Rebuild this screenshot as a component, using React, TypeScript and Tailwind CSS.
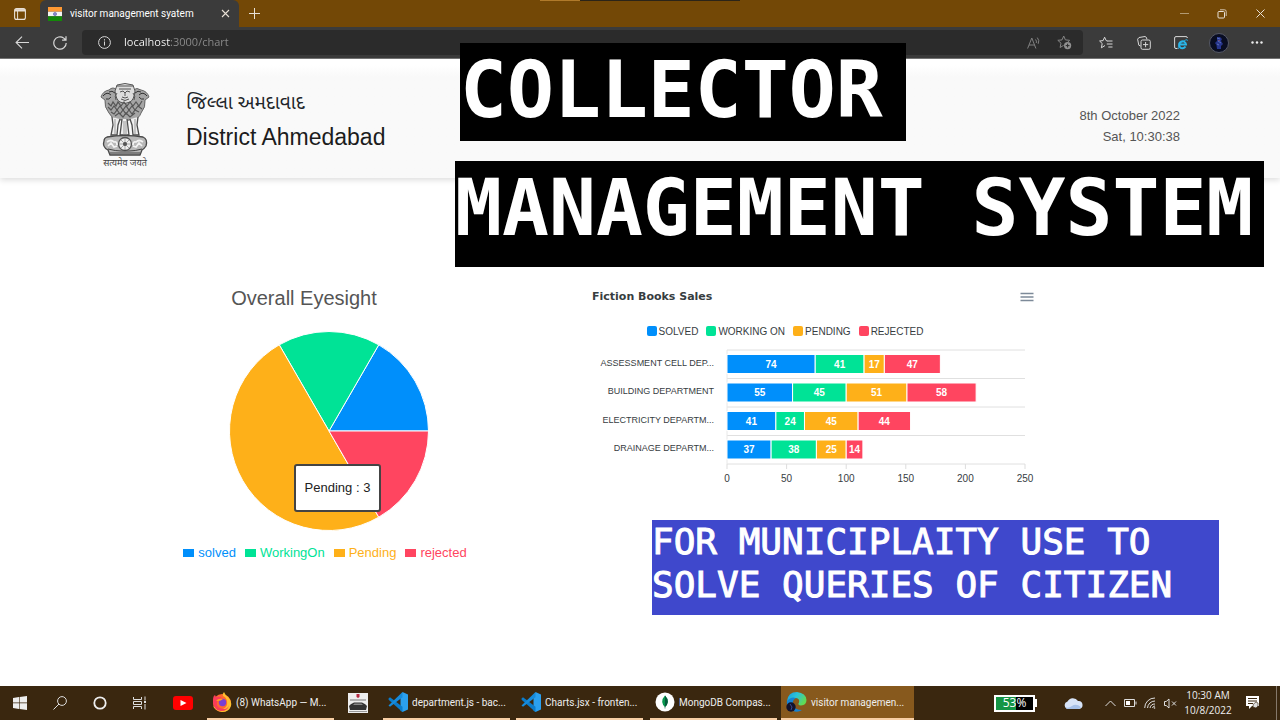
import type { ReactNode } from 'react';

const BLUE = '#008ffb';
const GREEN = '#00e396';
const AMBER = '#feb019';
const RED = '#ff4560';

type Row = { label: string; values: number[] };

const series = [
  { name: 'SOLVED', color: BLUE },
  { name: 'WORKING ON', color: GREEN },
  { name: 'PENDING', color: AMBER },
  { name: 'REJECTED', color: RED },
];

const rows: Row[] = [
  { label: 'ASSESSMENT CELL DEP...', values: [74, 41, 17, 47] },
  { label: 'BUILDING DEPARTMENT', values: [55, 45, 51, 58] },
  { label: 'ELECTRICITY DEPARTM...', values: [41, 24, 45, 44] },
  { label: 'DRAINAGE DEPARTM...', values: [37, 38, 25, 14] },
];

const slices = [
  { name: 'solved', value: 1, color: BLUE },
  { name: 'WorkingOn', value: 1, color: GREEN },
  { name: 'Pending', value: 3, color: AMBER },
  { name: 'rejected', value: 1, color: RED },
];

function IconButton({ label, className, children }: { label: string; className?: string; children: ReactNode }) {
  return (
    <button type="button" aria-label={label} className={`flex shrink-0 items-center justify-center ${className ?? ''}`}>
      {children}
    </button>
  );
}

function TitleBar() {
  return (
    <div className="relative flex h-[27px] items-stretch bg-[#734806] text-[#e8e0d6]">
      <div className="absolute left-[540px] top-0 flex h-px w-[200px]">
        <div className="w-10 bg-[#b07a2a]" />
        <div className="flex-1 bg-[#2b2418]" />
      </div>
      <IconButton label="Tab actions" className="w-10">
        <svg width="12" height="12" viewBox="0 0 12 12" fill="none" stroke="currentColor">
          <rect x=".6" y=".6" width="10.8" height="10.8" rx="2" strokeWidth="1.1" />
          <path d="M1 2.3h10" strokeWidth="2.4" />
          <path d="M3.6 2v9" strokeWidth="1" />
        </svg>
      </IconButton>
      <div className="flex w-[199px] items-center rounded-t-md bg-[#3b3b3b] pl-2">
        <svg width="14" height="14" viewBox="0 0 14 14">
          <path d="M0 0h14v4.7H0z" fill="#ff9933" />
          <path d="M0 4.7h14v4.6H0z" fill="#f4f4f4" />
          <path d="M0 9.3h14V14H0z" fill="#138808" />
          <circle cx="7" cy="7" r="1.6" fill="#8a8ac8" stroke="#4848a0" strokeWidth=".5" />
        </svg>
        <span className="ml-2 flex-1 whitespace-nowrap font-['Roboto',sans-serif] text-[10px] text-white">visitor management syatem</span>
        <IconButton label="Close tab" className="mr-[9px]">
          <svg width="9" height="9" viewBox="0 0 9 9" stroke="currentColor" strokeWidth="1.1">
            <path d="M1 1l7 7M8 1L1 8" />
          </svg>
        </IconButton>
      </div>
      <IconButton label="New tab" className="w-[30px]">
        <svg width="11" height="11" viewBox="0 0 11 11" stroke="currentColor">
          <path d="M5.5 0v11M0 5.5h11" />
        </svg>
      </IconButton>
      <div className="flex-1" />
      <IconButton label="Minimize" className="w-[38px]">
        <svg width="9" height="9" viewBox="0 0 9 9" stroke="#b29a72"><path d="M0 4.5h9" /></svg>
      </IconButton>
      <IconButton label="Restore" className="w-[38px]">
        <svg width="10" height="10" viewBox="0 0 10 10" fill="none" stroke="currentColor">
          <rect x="1" y="2.5" width="6.5" height="6.5" rx="1" />
          <path d="M3 .8h4.6A1.6 1.6 0 0 1 9.2 2.4V7" strokeWidth=".8" />
        </svg>
      </IconButton>
      <IconButton label="Close window" className="w-[39px]">
        <svg width="9" height="9" viewBox="0 0 9 9" stroke="currentColor"><path d="M.5.5l8 8M8.5.5l-8 8" /></svg>
      </IconButton>
    </div>
  );
}

function AddressBar() {
  return (
    <div className="flex h-8 items-center border-b border-[#777] bg-[#3b3b3b] pr-1 text-[#d8d8d8]">
      <IconButton label="Back" className="ml-1 w-[37px]">
        <svg width="15" height="13" viewBox="0 0 15 13" fill="none" stroke="currentColor" strokeWidth="1.1">
          <path d="M14 6.5H1M7 .7L1.1 6.5 7 12.3" />
        </svg>
      </IconButton>
      <IconButton label="Refresh" className="w-[37px]">
        <svg width="14" height="14" viewBox="0 0 14 14" fill="none" stroke="currentColor" strokeWidth="1.2">
          <path d="M13.2 7A6.2 6.2 0 1 1 10.8 2.1L12.8 4M13 .3V4.200H9.100" />
        </svg>
      </IconButton>
      <div className="ml-1 flex h-[25px] flex-1 items-center rounded bg-[#2b2b2b] pl-4 pr-[11px]">
        <svg width="13" height="13" viewBox="0 0 13 13" fill="none" stroke="currentColor">
          <circle cx="6.5" cy="6.5" r="5.9" />
          <path d="M6.500 5.500v4M6.500 3.200v1.300" />
        </svg>
        <input
          aria-label="Address"
          defaultValue="localhost:3000/chart"
          className="ml-[13px] flex-1 bg-[linear-gradient(90deg,#fff_46px,#8d8d8d_46px)] bg-clip-text text-[11px] text-transparent outline-none"
        />
        <IconButton label="Read aloud">
          <svg width="14" height="12" viewBox="0 0 14 12" fill="none" stroke="#808080">
            <path d="M.6 11.500L4.800 1l4.100 10.500M2 8h5.600M8.500 2.500q1.500 1.500.8 3.500M10.300.6q2.500 3 .9 6.200" />
          </svg>
        </IconButton>
        <IconButton label="Add to favorites" className="ml-4">
          <svg width="15" height="15" viewBox="0 0 15 15" fill="none" stroke="#858585">
            <path d="M6.700 1l1.700 3.900 4.200.4-2 2M6.700 1L5 4.900l-4.200.4L4 8.200 3.100 12.500l3.600-2.200" />
            <circle cx="10.600" cy="10.600" r="3.600" fill="#909090" stroke="none" />
            <path d="M10.600 8.700v3.800M8.700 10.600h3.800" stroke="#2b2b2b" />
          </svg>
        </IconButton>
      </div>
      <IconButton label="Favorites" className="ml-1 w-[38px]">
        <svg width="14" height="14" viewBox="0 0 14 14" fill="none" stroke="currentColor">
          <path d="M8.600 5L7.200 4.600 5.600 1.200 4.100 4.600.6 5l2.600 2.500-.8 4.300 3.600-2.300M8.200 5h5.300M7.800 8h5.700M9.300 11h4.200" />
        </svg>
      </IconButton>
      <IconButton label="Collections" className="w-[37px]">
        <svg width="14" height="14" viewBox="0 0 14 14" fill="none" stroke="currentColor">
          <path d="M3.500 10L1.800 9.200.6 3.200 2 1.500l6-1L9.500 1.500l.4 1.800" />
          <rect x="4" y="4" width="9.300" height="9.300" rx="1.500" />
          <path d="M8.600 6v5.200M6 8.600h5.200" />
        </svg>
      </IconButton>
      <IconButton label="Internet Explorer mode" className="w-[37px]">
        <svg width="14" height="14" viewBox="0 0 14 14" fill="none" stroke="currentColor">
          <path d="M3.500 12.500H2A1.400 1.400 0 0 1 .6 11V2A1.400 1.400 0 0 1 2 .6h10A1.400 1.400 0 0 1 13.400 2" />
          <path d="M5.200 8.400h6.800A3.500 3.500 0 1 0 11.500 10.600" stroke="#29b5e8" strokeWidth="2" />
          <path d="M4.500 13q-1-1 1.200-4.300T12.500 3.500q1.200 0 .6 1.500" stroke="#29b5e8" strokeWidth=".8" />
        </svg>
      </IconButton>
      <IconButton label="Profile" className="w-[39px]">
        <svg width="20" height="20" viewBox="0 0 20 20">
          <circle cx="10" cy="10" r="9.500" fill="#090d22" stroke="#565966" />
          <path d="M8 4h3l2 2-1 2 2 3-2 2v3H8l-.5-4L6 10l2-2z" fill="#27358c" />
          <path d="M8 5l3 1M9 8l3 2M8 11l2 1" stroke="#5a70bb" />
          <path d="M10 7v1" stroke="#b46060" />
        </svg>
      </IconButton>
      <IconButton label="Settings and more" className="w-[38px]">
        <svg width="12" height="3" viewBox="0 0 12 3" fill="#eee">
          <circle cx="1.500" cy="1.500" r="1.200" /><circle cx="6" cy="1.500" r="1.200" /><circle cx="10.500" cy="1.500" r="1.200" />
        </svg>
      </IconButton>
    </div>
  );
}

function Emblem() {
  return (
    <div className="flex w-[50px] flex-col items-center">
      <svg width="50" height="74" viewBox="0 0 50 74" fill="none" stroke="#555" strokeWidth="1">
        <path d="M9 7Q3 8 1 14l4 3Q4 24 9 30q3 6 8 6l8 2 8-2q6 0 8-6 5-6 4-13l4-3Q47 8 41 7q-4-3-8 0L17 7Q13 3 9 7z" fill="#a5a5a5" stroke="#666" />
        <path d="M17 2q8-3 16 0l2 6q-1 9-5 11-5 3-10 0-4-2-5-11z" fill="#ddd" />
        <path d="M17 3h16M19 6h12M20 9l3-1 2 2 2-2 3 1M25 9v4M22 14q3 2 6 0M21 16q4 3 8 0M17 10q-3 3-1 7M33 10q3 3 1 7" />
        <path d="M3 13q4-5 8-1M6 16q3 1 5-2M47 13q-4-5-8-1M44 16q-3 1-5-2M9 9q3-2 6 1M41 9q-3-2-6 1" stroke="#333" />
        <path d="M8 20l3 3 2-4 3 4 2-4 3 4 3-4 3 4 3-4 3 4 3-4 3 4 3-5M8 24l3 3 3-4 3 4 3-4 3 4 3-4 3 4 3-4 3 4 3-4 4 3M11 29l3 2 3-4 3 4 3-4 3 4 3-4 3 4 3-4 4 2M15 33l4-3 4 4 3-4 4 4 5-4" stroke="#555" strokeWidth="1.200" />
        <path d="M12 34l1 8-2 10h6l1-10 2-6M22 36l-2 16h9l-2-16M30 36l2 6 1 10h6l-2-10 1-8" fill="#eee" stroke="#4b4b4b" strokeWidth="1.300" />
        <path d="M15 36v15M24 38v14M26 38v14M35 36v15" stroke="#999" />
        <path d="M7 54q18-3 36 0 5 2 3 9-2 3-4 4l-2 5H10l-2-5q-6-3-4-9 0-3 3-4z" fill="#b8b8b8" stroke="#484848" strokeWidth="1.300" />
        <circle cx="25" cy="61" r="6.500" fill="#eee" strokeWidth="1.300" />
        <path d="M25 55v12M19 61h12M21 57l8 8M29 57l-8 8" stroke="#888" strokeWidth=".7" />
        <circle cx="25" cy="61" r="1.500" fill="#555" />
        <path d="M7 59q4-3 7 0 3-1 3 3M8 63l3-3 3 4 3-1M43 59q-4-3-7 0-3-1-3 3M42 63l-3-3-3 4-3-1" stroke="#f3f3f3" strokeWidth="1.700" />
        <path d="M8 66q8 2 13 2h8q6 0 13-2M10 70h30" stroke="#444" />
      </svg>
      <span className="whitespace-nowrap font-['Noto_Sans_Devanagari','Noto_Sans',sans-serif] text-[9px] leading-[14px] text-[#444]">सत्यमेव जयते</span>
    </div>
  );
}

function PageHeader() {
  return (
    <header className="flex h-[119px] items-center justify-between bg-linear-to-b from-white from-5% to-[#f9f9f9] to-15% px-[100px] shadow-[0_2px_6px_rgba(0,0,0,0.14)]">
      <div className="flex items-center gap-9 pt-4">
        <Emblem />
        <div className="pb-3 text-[#212529]">
          <p className="font-['Noto_Sans_Gujarati','Noto_Sans',sans-serif] text-[19px] leading-8">જિલ્લા અમદાવાદ</p>
          <h1 className="text-[23px] leading-8 text-[#1c1c1c]">District Ahmedabad</h1>
        </div>
      </div>
      <div className="pt-[14px] text-right text-[13px] leading-[21px] text-[#555]">
        <p>8th October 2022</p>
        <p>Sat, 10:30:38</p>
      </div>
    </header>
  );
}

function PieChart() {
  const total = slices.reduce((sum, s) => sum + s.value, 0);
  const point = (a: number) => `${100 + 99.5 * Math.cos(a)} ${100 - 99.5 * Math.sin(a)}`;
  let angle = 0;
  return (
    <section className="ml-[179px] flex w-[300px] flex-col items-center">
      <h2 className="-ml-[50px] h-[47px] text-[20px] leading-7 text-[#555]">Overall Eyesight</h2>
      <div className="relative h-[200px] w-[200px]">
        <svg width="200" height="200" viewBox="0 0 200 200" role="img" aria-label="Overall Eyesight">
          {slices.map((s) => {
            const start = angle;
            angle += (s.value / total) * Math.PI * 2;
            return (
              <path
                key={s.name}
                d={`M100 100L${point(start)}A99.5 99.5 0 0 0 ${point(angle)}Z`}
                fill={s.color}
                stroke="#fff"
              />
            );
          })}
        </svg>
        <div className="absolute left-[65px] top-[133px] flex h-12 w-[87px] items-center justify-center rounded-[3px] border-2 border-[#444] bg-white text-[13px] text-[#222]">
          Pending : 3
        </div>
      </div>
      <ul className="-ml-2 mt-3 flex gap-[9px] whitespace-nowrap text-[13px] leading-5">
        {slices.map((s) => (
          <li key={s.name} className="flex items-center gap-1" style={{ color: s.color }}>
            <span className="h-2 w-[11px] bg-current" />
            {s.name}
          </li>
        ))}
      </ul>
    </section>
  );
}

function BarChart() {
  const left = 135;
  const scale = 298 / 250;
  return (
    <section className="w-[450px]">
      <div className="flex items-center justify-between pr-2">
        <h2 className="font-['DejaVu_Sans',sans-serif] text-[11px] font-bold leading-5 text-[#373d3f]">Fiction Books Sales</h2>
        <IconButton label="Chart menu">
          <svg width="14" height="10" viewBox="0 0 14 10" stroke="#7d8a99" strokeWidth="1.500">
            <path d="M.5 1.500h13M.5 5h13M.5 8.500h13" />
          </svg>
        </IconButton>
      </div>
      <ul className="mt-[17px] flex h-[15px] justify-center gap-2 pr-16 text-[10px] leading-4 text-[#373d3f]">
        {series.map((s) => (
          <li key={s.name} className="flex items-center gap-[2px] whitespace-nowrap">
            <span className="mb-[2px] size-[10px] rounded-[2px]" style={{ backgroundColor: s.color }} />
            {s.name}
          </li>
        ))}
      </ul>
      <svg width="450" height="150" viewBox="0 0 450 150" className="font-['Liberation_Sans',sans-serif]" role="img" aria-label="Fiction Books Sales">
        {[0, 1, 2, 3, 4].map((i) => (
          <path key={i} d={`M${left} ${11 + i * 28.5}h298`} stroke="#e0e0e0" />
        ))}
        <path d={`M${left} 11v114`} stroke="#e8e8e8" />
        {[0, 50, 100, 150, 200, 250].map((v) => (
          <g key={v}>
            <path d={`M${left + v * scale} 125v5`} stroke="#ddd" />
            <text x={left + v * scale} y="143" textAnchor="middle" fontSize="10" fill="#373d3f">{v}</text>
          </g>
        ))}
        {rows.map((row, r) => {
          const top = 15.5 + r * 28.5;
          let sum = 0;
          return (
            <g key={row.label}>
              <text x="122" y={top + 11} textAnchor="end" fontSize="9" fill="#373d3f">{row.label}</text>
              {row.values.map((v, i) => {
                const x = left + sum * scale;
                sum += v;
                return (
                  <g key={series[i].name}>
                    <rect x={x} y={top} width={v * scale} height="19" fill={series[i].color} stroke="#fff" />
                    <text x={x + (v * scale) / 2} y={top + 13} textAnchor="middle" fontSize="10" fontWeight="700" fill="#fff">{v}</text>
                  </g>
                );
              })}
            </g>
          );
        })}
      </svg>
    </section>
  );
}

function VsCode() {
  return (
    <svg width="20" height="20" viewBox="0 0 20 20" className="shrink-0">
      <path d="M14.500 0L20 2.500v15L14.500 20l-2-1.500V5z" fill="#2ba0ef" />
      <path d="M.5 6.500L2 5.300l12.500 9.500V20L.6 7.800z" fill="#0b7ccb" />
      <path d="M.5 13.500L14.500 0v5.200L2 14.700z" fill="#168bdc" />
    </svg>
  );
}

function Firefox() {
  return (
    <svg width="20" height="20" viewBox="0 0 20 20" className="shrink-0">
      <circle cx="10" cy="11" r="9" fill="#ff6830" />
      <path d="M12 0q1 3 4 5 4 4 3 9-2 6-9 6-7-1-9-6 5 4 10 3 5-2 4-8-1-4-4-5-1-2 1-4z" fill="#ffc02e" />
      <path d="M1 8q0-4 2-5l1 2q4-1 6 1-4 1-5 4-1 4 3 6 7 3 9-3-1 6-8 6-7-1-8-8z" fill="#fb3c59" />
      <circle cx="10.500" cy="10.500" r="3.700" fill="#7a3fd2" />
      <path d="M4 9q2-3 7-2-2 2-5 2z" fill="#ff9d25" />
    </svg>
  );
}

function Mongo() {
  return (
    <svg width="20" height="20" viewBox="0 0 20 20" className="shrink-0">
      <circle cx="10" cy="10" r="9.500" fill="#fff" />
      <path d="M10 3.500q3 3 2.800 6.500-.4 3.500-2.800 5-2.400-1.500-2.800-5-.2-3.500 2.800-6.500z" fill="#07974f" />
      <path d="M10 3.500q3 3 2.800 6.500-.4 3.500-2.800 5zM9.700 14h.6v2.500h-.6z" fill="#045a3a" />
    </svg>
  );
}

function Edge() {
  return (
    <svg width="21" height="20" viewBox="0 0 21 20" className="shrink-0">
      <defs>
        <linearGradient id="edge" x1="0" y1="0" x2="1" y2=".5">
          <stop stopColor="#1799dd" /><stop offset=".5" stopColor="#2bc4d8" /><stop offset="1" stopColor="#62db53" />
        </linearGradient>
      </defs>
      <path d="M1 9Q2 0 11 0q9 1 9.500 8 0 5-5.500 5.500-4-.5-2-3 1-4-3-4.500Q4 6 1 10z" fill="url(#edge)" />
      <path d="M1 9q4-5 9-3-4 2-3 7 2 5 9 5-4 3-9 1-7-3-6-10z" fill="#1583d4" />
      <circle cx="5" cy="15" r="4.700" fill="#12132d" />
      <path d="M4 12l2 3-1 3" stroke="#3c488e" fill="none" />
    </svg>
  );
}

function Task({ icon, title, width, active }: { icon: ReactNode; title: string; width: string; active?: boolean }) {
  return (
    <button
      type="button"
      className={`flex shrink-0 items-center gap-1 border-b-2 border-[#f8cfa5] pl-[5px] text-left font-['Roboto',sans-serif] text-[10px] text-[#eee] ${width} ${active ? 'bg-[#87591d]' : ''}`}
    >
      {icon}
      <span className="whitespace-nowrap">{title}</span>
    </button>
  );
}

function Taskbar() {
  return (
    <footer className="flex h-[34px] items-stretch bg-[#3a270f] font-['Open_Sans',sans-serif] text-[#ddd]">
      <IconButton label="Start" className="w-10">
        <svg width="14" height="14" viewBox="0 0 14 14" fill="#eee"><path d="M0 2l6-1v5.600H0zM6.600.9L14 0v6.600H6.600zM0 7.300h6V13l-6-1zM6.600 7.300H14V14l-7.400-1z" /></svg>
      </IconButton>
      <IconButton label="Search" className="w-10">
        <svg width="14" height="14" viewBox="0 0 14 14" fill="none" stroke="currentColor"><circle cx="9" cy="5" r="4.400" /><path d="M6 8L.5 13.500" /></svg>
      </IconButton>
      <IconButton label="Cortana" className="w-10">
        <svg width="14" height="14" viewBox="0 0 14 14" fill="none" stroke="#eee" strokeWidth="1.800"><circle cx="7" cy="7" r="5.700" /></svg>
      </IconButton>
      <IconButton label="Task view" className="w-10">
        <svg width="14" height="14" viewBox="0 0 14 14" fill="none" stroke="currentColor"><path d="M.5 1v2.500h8V1M.5 13v-2.500h8V13M.5 5.500h8v3h-8zM12 .5v4M12 8v5.500" /><path d="M11 5h2v2h-2z" fill="currentColor" stroke="none" /></svg>
      </IconButton>
      <IconButton label="YouTube" className="w-[45px]">
        <svg width="20" height="14" viewBox="0 0 20 14"><rect width="20" height="14" rx="3" fill="#f00" /><path d="M7.500 4l6 3-6 3z" fill="#fff" /></svg>
      </IconButton>
      <Task icon={<Firefox />} title="(8) WhatsApp — M..." width="ml-[2px] w-[127px]" />
      <IconButton label="Pictures" className="ml-[3px] w-[41px]">
        <svg width="20" height="20" viewBox="0 0 20 20">
          <path d="M0 0h20v20H0z" fill="#eee" />
          <path d="M8.500 1h3v3l-1.500 1-1.500-1z" fill="#b62940" />
          <path d="M2 7h16" stroke="#777" />
          <path d="M1 13q1-2 5-3.500h8q4 1.500 5 3.500l-1 4H2z" fill="#333" />
          <path d="M6.500 10.500h7l1.500 1.500H5z" fill="#888" />
          <path d="M1 18.500h18" stroke="#999" />
        </svg>
      </IconButton>
      <Task icon={<VsCode />} title="department.js - bac..." width="ml-[5px] w-[127px]" />
      <Task icon={<VsCode />} title="Charts.jsx - fronten..." width="ml-[6px] w-[127px]" />
      <Task icon={<Mongo />} title="MongoDB Compas..." width="ml-[7px] w-[127px]" />
      <Task icon={<Edge />} title="visitor managemen..." width="ml-1 w-[133px]" active />
      <div className="flex-1" />
      <div className="flex items-center">
        <div className="flex h-[17px] w-[41px] items-center justify-center border-2 border-white bg-[linear-gradient(90deg,#159545_53%,#000_53%)] text-[12px] text-white">53%</div>
        <div className="h-2 w-[2px] bg-white" />
      </div>
      <IconButton label="Weather" className="ml-[25px] w-[22px]">
        <svg width="20" height="13" viewBox="0 0 20 13"><path d="M4 12a4 4 0 0 1 .5-7.500A6 6 0 0 1 15 4a4 4 0 0 1 1 8z" fill="#d8e4f8" /><path d="M2 10q3 2 7-1t9 1q-1 2-3 2H4z" fill="#a7c1e9" /></svg>
      </IconButton>
      <IconButton label="Show hidden icons" className="ml-4 w-5">
        <svg width="11" height="7" viewBox="0 0 11 7" fill="none" stroke="currentColor"><path d="M.5 6l5-5 5 5" /></svg>
      </IconButton>
      <IconButton label="Battery" className="w-5">
        <svg width="13" height="8" viewBox="0 0 13 8" fill="none" stroke="currentColor"><path d="M.5.5h10v7H.5zM12 2.500v3" /><path d="M2 2h4v4H2z" fill="#fff" stroke="none" /></svg>
      </IconButton>
      <IconButton label="Network" className="w-5">
        <svg width="12" height="12" viewBox="0 0 12 12" fill="none" stroke="currentColor"><path d="M.7 11A10 10 0 0 1 11 1M3.500 11A7.500 7.500 0 0 1 11 4M6 11a5 5 0 0 1 5-4M8.500 11a2.500 2.500 0 0 1 2.500-2" /><circle cx="10.500" cy="11" r=".8" fill="currentColor" stroke="none" /></svg>
      </IconButton>
      <IconButton label="Volume muted" className="w-5">
        <svg width="13" height="11" viewBox="0 0 13 11" fill="none" stroke="currentColor"><path d="M.5 3.500h1.700L5 1v9L2.200 7.500H.5zM8 3.500l4 4M12 3.500l-4 4" /></svg>
      </IconButton>
      <div className="ml-[2px] w-[52px] self-center whitespace-nowrap text-center text-[10px] leading-[15px] text-[#eee]">
        <p>10:30 AM</p>
        <p>10/8/2022</p>
      </div>
      <IconButton label="Notifications" className="ml-[2px] w-[34px]">
        <svg width="14" height="14" viewBox="0 0 14 14"><path d="M0 0h13v10H6l-3 3v-3H0z" fill="#fff" /><path d="M2 2.500h9M2 5h9M2 7.500h5" stroke="#3a270f" /><path d="M10 6q3 0 2 4l-2 2-3-1q-1-3 3-5z" fill="#ddd" stroke="#3a270f" strokeWidth=".6" /></svg>
      </IconButton>
      <div className="ml-[6px] w-1 border-l border-[#85786a]" />
    </footer>
  );
}

export default function App() {
  return (
    <div className="relative flex min-h-screen flex-col bg-white font-['Liberation_Sans',Arial,sans-serif]">
      <div className="font-['Open_Sans',sans-serif]">
        <TitleBar />
        <AddressBar />
      </div>
      <PageHeader />
      <main className="flex flex-1 items-start pt-[106px]">
        <PieChart />
        <div className="ml-[113px] pt-[3px]">
          <BarChart />
        </div>
      </main>
      <Taskbar />
      <div className="absolute left-[460px] top-[43px] h-[98px] w-[446px] whitespace-nowrap bg-black font-['DejaVu_Sans_Mono',monospace] text-[78px] font-bold leading-[94px] text-white">
        COLLECTOR
      </div>
      <div className="absolute left-[455px] top-[161px] h-[106px] w-[809px] whitespace-nowrap bg-black font-['DejaVu_Sans_Mono',monospace] text-[78px] font-bold leading-[94px] text-white">
        MANAGEMENT SYSTEM
      </div>
      <div className="absolute left-[652px] top-[520px] h-[95px] w-[567px] whitespace-nowrap bg-[#3f48cc] font-['DejaVu_Sans_Mono',monospace] text-[36px] leading-[43px] text-white [-webkit-text-stroke:1px_white]">
        FOR MUNICIPLAITY USE TO
        <br />
        SOLVE QUERIES OF CITIZEN
      </div>
    </div>
  );
}
